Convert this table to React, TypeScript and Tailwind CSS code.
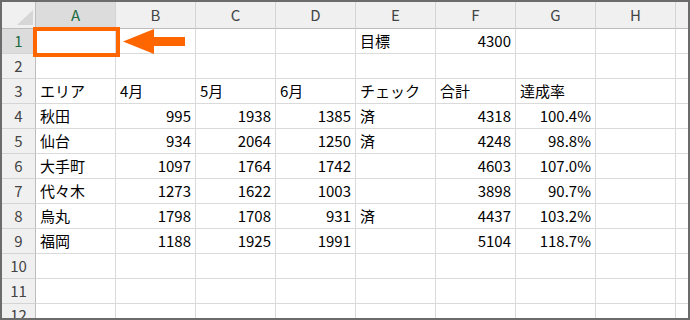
import React from 'react';

const cols = ['A', 'B', 'C', 'D', 'E', 'F', 'G', 'H'];

type Cell = { v: string; r?: boolean };

const t = (v: string): Cell => ({ v });
const n = (v: string): Cell => ({ v, r: true });

const rows: Cell[][] = [
  [t(''), t(''), t(''), t(''), t('目標'), n('4300'), t(''), t('')],
  [],
  [t('エリア'), t('4月'), t('5月'), t('6月'), t('チェック'), t('合計'), t('達成率'), t('')],
  [t('秋田'), n('995'), n('1938'), n('1385'), t('済'), n('4318'), n('100.4%'), t('')],
  [t('仙台'), n('934'), n('2064'), n('1250'), t('済'), n('4248'), n('98.8%'), t('')],
  [t('大手町'), n('1097'), n('1764'), n('1742'), t(''), n('4603'), n('107.0%'), t('')],
  [t('代々木'), n('1273'), n('1622'), n('1003'), t(''), n('3898'), n('90.7%'), t('')],
  [t('烏丸'), n('1798'), n('1708'), n('931'), t('済'), n('4437'), n('103.2%'), t('')],
  [t('福岡'), n('1188'), n('1925'), n('1991'), t(''), n('5104'), n('118.7%'), t('')],
  [],
  [],
  [],
];

export default function App() {
  return (
    <div
      className="relative w-[690px] h-[320px] overflow-hidden border-2 border-[#6b6b6b] bg-white text-[15px] text-black"
      style={{ fontFamily: '"Noto Sans CJK JP", "Noto Sans", sans-serif' }}
    >
      <div className="grid grid-cols-[34px_repeat(8,80px)_1fr] grid-rows-[27px_repeat(11,25px)_1fr] h-full">
        {/* corner */}
        <div className="relative bg-[#f0f0f0] border-r border-b border-[#bdbdbd]">
          <svg className="absolute right-[2px] bottom-[3px]" width="16" height="15" viewBox="0 0 16 15">
            <polygon points="16,0 16,15 0,15" fill="#d6d6d6" />
          </svg>
        </div>
        {cols.map((c, i) => (
          <div
            key={c}
            className={`flex items-center justify-center border-r border-b border-b-[#bdbdbd] border-r-[#d4d4d4] ${
              i === 0 ? 'bg-[#dcdcdc] text-[#1e6b41]' : 'bg-[#f0f0f0] text-[#444]'
            }`}
          >
            {c}
          </div>
        ))}
        <div className="bg-[#f0f0f0] border-b border-[#bdbdbd]" />

        {rows.map((row, ri) => (
          <React.Fragment key={ri}>
            <div
              className={`flex items-center justify-center border-r border-b border-r-[#bdbdbd] border-b-[#d4d4d4] ${
                ri === 0 ? 'bg-[#dcdcdc] text-[#1e6b41]' : 'bg-[#f0f0f0] text-[#444]'
              }`}
            >
              {ri + 1}
            </div>
            {cols.map((c, ci) => {
              const cell = row[ci];
              return (
                <div
                  key={c}
                  className={`flex items-center px-[4px] whitespace-nowrap border-r border-b border-[#dadada] ${
                    cell?.r ? 'justify-end' : 'justify-start'
                  }`}
                >
                  {cell?.v}
                </div>
              );
            })}
            <div className="border-b border-[#dadada]" />
          </React.Fragment>
        ))}
      </div>

      {/* highlight box on A1 */}
      <div className="absolute left-[31px] top-[25px] w-[87px] h-[30px] border-4 border-[#ff6600]" />

      {/* arrow */}
      <svg className="absolute left-[121px] top-[27px]" width="62" height="26" viewBox="0 0 62 26">
        <polygon points="0,12.5 31,0 31,8 62,8 62,17 31,17 31,25" fill="#ff6600" />
      </svg>
    </div>
  );
}
